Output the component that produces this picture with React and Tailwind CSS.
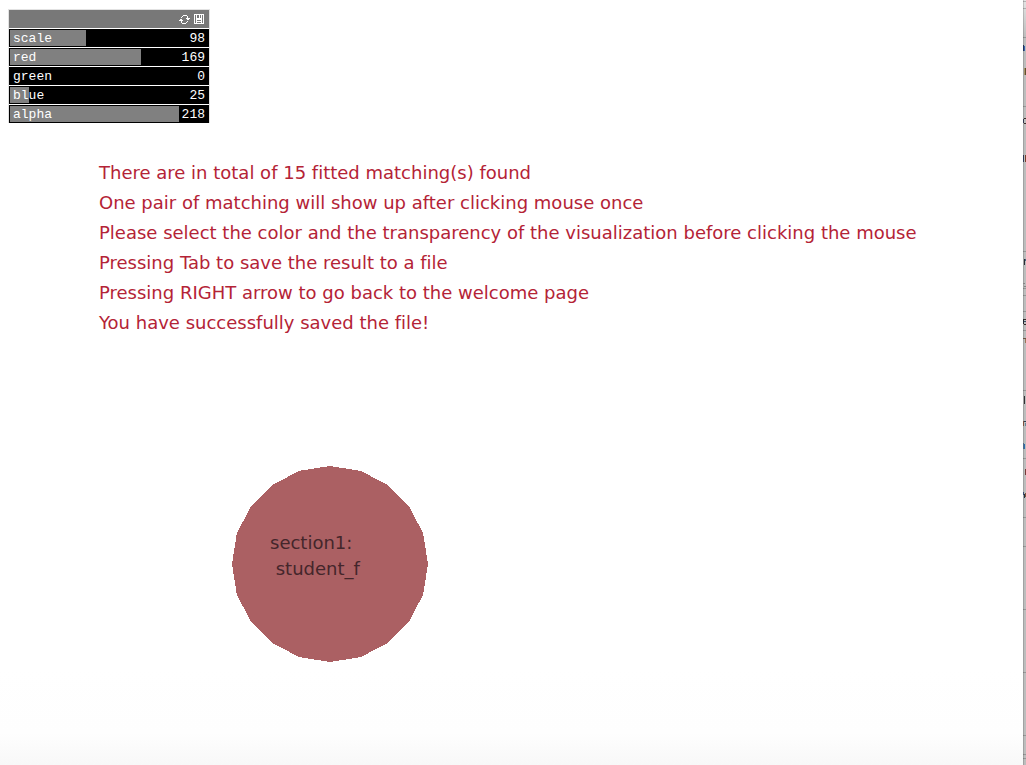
import { useState } from "react";

const CHANNELS = [
  { name: "scale", value: 98 },
  { name: "red", value: 169 },
  { name: "green", value: 0 },
  { name: "blue", value: 25 },
  { name: "alpha", value: 218 },
];

const MESSAGES = [
  "There are in total of 15 fitted matching(s) found",
  "One pair of matching will show up after clicking mouse once",
  "Please select the color and the transparency of the visualization before clicking the mouse",
  "Pressing Tab to save the result to a file",
  "Pressing RIGHT arrow to go back to the welcome page",
  "You have successfully saved the file!",
];

function ChannelSlider({ name, initial }) {
  const [value, setValue] = useState(initial);
  return (
    <label className="relative block h-[18px] bg-black p-px text-white">
      <span
        className="block h-full bg-[#808080]"
        style={{ width: `${(value / 255) * 100}%` }}
      />
      <span className="absolute inset-0 flex items-center justify-between px-1 pt-0.5 leading-4">
        <span>{name}</span>
        <span>{value}</span>
      </span>
      <input
        type="range"
        min="0"
        max="255"
        value={value}
        onChange={(e) => setValue(Number(e.target.value))}
        className="absolute inset-0 h-full w-full cursor-pointer appearance-none opacity-0"
      />
    </label>
  );
}

function RefreshIcon() {
  return (
    <svg width="11" height="9" viewBox="0 0 11 9" fill="#fff" shapeRendering="crispEdges" aria-hidden="true">
      <path d="M4 0h4v1h-4zM3 1h1v1h-1zM8 1h1v2h-1zM2 2h1v1h-1zM7 3h4v1h-4zM8 4h2v1h-2zM1 4h2v1h-2zM0 5h4v1h-4zM2 6h1v2h-1zM8 6h1v1h-1zM7 7h1v1h-1zM3 8h4v1h-4z" />
    </svg>
  );
}

function SaveIcon() {
  return (
    <svg width="10" height="10" viewBox="0 0 10 10" shapeRendering="crispEdges" aria-hidden="true">
      <path fill="#fff" d="M0 0h10v10h-10z" />
      <path fill="#787878" d="M1 1h1v8h-1zM8 1h1v8h-1zM3 1h2v3h-2zM6 1h1v3h-1zM3 6h4v1h-4zM3 8h4v1h-4z" />
    </svg>
  );
}

function ControlPanel() {
  return (
    <section
      aria-label="Colour controls"
      className="w-[202px] border border-b-0 border-[#e2e2e2] font-['Liberation_Mono',monospace] text-[13px]"
    >
      <div className="flex h-[18px] items-center justify-end gap-1 bg-[#787878] pr-[5px]">
        <button type="button" aria-label="Reset">
          <RefreshIcon />
        </button>
        <button type="button" aria-label="Save">
          <SaveIcon />
        </button>
      </div>
      <div className="flex flex-col gap-px pt-px">
        {CHANNELS.map((c) => (
          <ChannelSlider key={c.name} name={c.name} initial={c.value} />
        ))}
      </div>
    </section>
  );
}

function MatchNode() {
  const points = Array.from({ length: 20 }, (_, i) => {
    const a = (i * Math.PI) / 10;
    return `${98 + 98 * Math.cos(a)},${98 + 98 * Math.sin(a)}`;
  }).join(" ");
  return (
    <div className="grid w-[196px]">
      <svg width="196" height="196" viewBox="0 0 196 196" className="col-start-1 row-start-1" shapeRendering="crispEdges" aria-hidden="true">
        <polygon points={points} fill="#ab6063" />
      </svg>
      <p className="col-start-1 row-start-1 whitespace-pre pt-16 pl-[38px] text-lg leading-[26px] text-[#44262b]">
        {"section1:\n student_f"}
      </p>
    </div>
  );
}

const DIVIDERS = [1, 8, 37, 106, 251, 288, 295, 311, 330, 390, 458, 517, 546, 609, 672, 735, 754, 758];

const SLIVERS = [
  [0, 45, 1, 6, "#223355"], [1, 46, 1, 5, "#3a5fae"],
  [1, 68, 1, 7, "#a8936a"], [2, 68, 1, 7, "#60502f"],
  [1, 118, 2, 1, "#40302c"], [0, 119, 1, 4, "#30364c"], [1, 123, 2, 1, "#40302c"],
  [0, 155, 1, 7, "#2c3450"], [2, 155, 1, 7, "#7a3f2c"],
  [1, 259, 1, 6, "#292d35"], [2, 259, 1, 2, "#4a6480"],
  [0, 283, 2, 1, "#858585"], [1, 286, 2, 1, "#858585"],
  [0, 319, 1, 5, "#24272f"], [1, 319, 2, 1, "#352a25"], [1, 321, 2, 1, "#364b64"], [1, 324, 2, 1, "#352a25"],
  [0, 338, 3, 1, "#705344"], [2, 339, 1, 4, "#9a7658"],
  [1, 396, 1, 8, "#303033"],
  [0, 421, 1, 5, "#80503d"], [1, 421, 2, 1, "#294055"], [2, 423, 1, 3, "#62889b"],
  [0, 443, 1, 6, "#526b85"], [1, 444, 1, 5, "#2f6cae"],
  [2, 469, 1, 6, "#753b38"],
  [0, 492, 1, 3, "#384c70"], [1, 494, 1, 4, "#243344"], [2, 493, 1, 4, "#82543b"],
];

function WindowEdge() {
  return (
    <svg width="3" height="765" viewBox="0 0 3 765" shapeRendering="crispEdges" className="shrink-0" aria-hidden="true">
      <defs>
        <linearGradient id="fade" x1="0" y1="0" x2="0" y2="1">
          <stop offset="0" stopColor="#e4e4e4" />
          <stop offset="1" stopColor="#bdbdbd" />
        </linearGradient>
      </defs>
      <rect width="3" height="765" fill="#bdbdbd" />
      <rect width="3" height="37" fill="url(#fade)" />
      <rect width="1" height="765" fill="#000" opacity="0.14" />
      {DIVIDERS.map((y) => (
        <rect key={y} y={y} width="3" height="1" fill="#000" opacity="0.2" />
      ))}
      {SLIVERS.map(([x, y, w, h, fill]) => (
        <rect key={`${x}-${y}`} x={x} y={y} width={w} height={h} fill={fill} />
      ))}
    </svg>
  );
}

export default function App() {
  return (
    <div className="flex min-h-screen bg-white font-['DejaVu_Sans',sans-serif] [font-variant-ligatures:none]">
      <main className="flex min-w-0 flex-1 flex-col bg-[linear-gradient(to_top,#f8f8f8,#fefefe_32px,#fff_96px)]">
        <div className="pt-[9px] pl-2">
          <ControlPanel />
        </div>
        <div className="pt-[35px] pl-[99px] text-lg leading-[30px] text-[#b42336]">
          {MESSAGES.map((m) => (
            <p key={m}>{m}</p>
          ))}
        </div>
        <div className="pt-32 pl-[232px]">
          <MatchNode />
        </div>
      </main>
      <WindowEdge />
    </div>
  );
}
